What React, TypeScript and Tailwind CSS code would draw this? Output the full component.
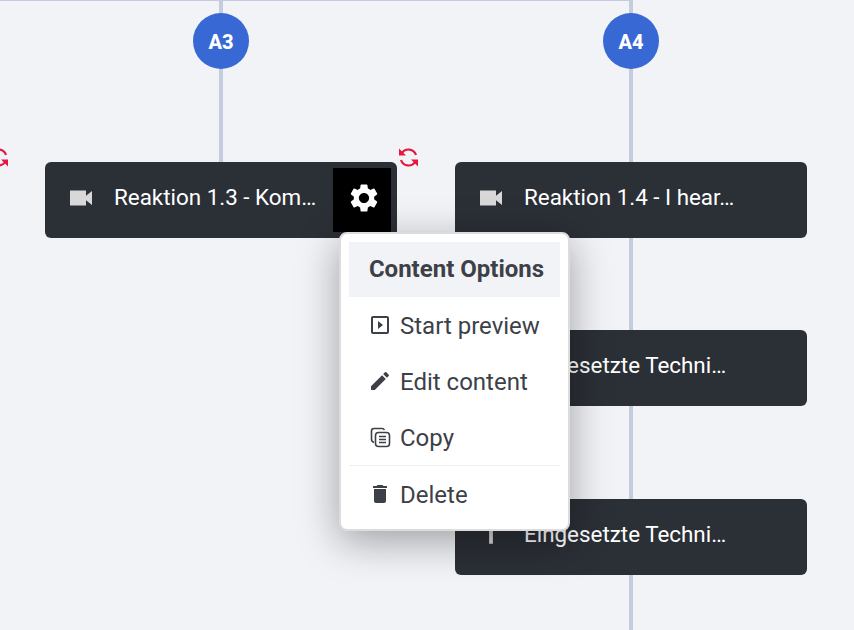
import { MdDelete, MdEdit, MdOutlineSlideshow, MdSettings, MdTitle } from "react-icons/md";

function CopyIcon() {
  return (
    <svg viewBox="0 0 24 24" fill="none" stroke="currentColor" strokeWidth="1.6" className="w-6 h-6">
      <path d="M6 17.5C4.6 17 3.5 16 3.5 14V6c0-1.5 1-2.5 2.5-2.5h8c1.2 0 2 .6 2.4 1.5" />
      <rect x="7.5" y="7.5" width="14" height="14" rx="3" />
      <path d="M11 11.5h7M11 14.5h7M11 17.5h7" />
    </svg>
  );
}

function VideoIcon() {
  return (
    <svg viewBox="0 0 22 16" fill="currentColor" className="w-[22px] h-4">
      <path d="M0 .5h16v5.2L22 1v14l-6-4.7v5.2H0z" />
    </svg>
  );
}

function SyncIcon({ className }: { className: string }) {
  return (
    <svg viewBox="0 0 19 19" className={`absolute -top-[14px] w-[19px] h-[19px] text-[#e8173f] ${className}`}>
      <path d="M2.8 5A8 8 0 0 1 17 7M16.2 14A8 8 0 0 1 2 12" fill="none" stroke="currentColor" strokeWidth="2.2" />
      <path d="M0 .5v7h7zM19 18.5v-7h-7z" fill="currentColor" />
    </svg>
  );
}

function Card({ text, icon, className, children }: { text: string; icon: React.ReactNode; className?: string; children?: React.ReactNode }) {
  return (
    <div className={`relative w-[352px] h-[76px] rounded-md bg-[#2b2f36] flex items-center p-[6px] ${className ?? ""}`}>
      <div className="w-[50px] ml-[5px] flex justify-center text-[#d8d8d8] shrink-0 pb-[5px]">{icon}</div>
      <span className="ml-[8px] pb-[6px] text-[22.4px] leading-none text-white flex-1 whitespace-nowrap">{text}</span>
      {children}
    </div>
  );
}

function Column({ label, lineClass, children }: { label: string; lineClass: string; children: React.ReactNode }) {
  return (
    <div className="relative w-[352px] flex flex-col items-center pt-[13px]">
      <div className={`absolute top-0 left-[174px] w-[4px] bg-[#c5cce0] ${lineClass}`} />
      <div className="relative w-14 h-14 rounded-full bg-[#3868d4] text-white font-extrabold text-[20px] pt-px flex items-center justify-center">{label}</div>
      {children}
    </div>
  );
}

function MenuItem({ icon, text }: { icon: React.ReactNode; text: string }) {
  return (
    <div className="h-14 flex items-center px-[19px] gap-2 text-[#3d4147] text-[24px] whitespace-nowrap">
      <span className="w-6 flex justify-center">{icon}</span>
      <span className="pt-[2px]">{text}</span>
    </div>
  );
}

export default function App() {
  return (
    <div className="relative h-[630px] w-[854px] overflow-hidden bg-[#f1f3f7] font-['Roboto',sans-serif]">
      <div className="absolute top-0 left-0 w-[631px] h-px bg-[#c5cce0]" />
      <div className="flex gap-[58px] pl-[45px] h-full">
        <Column label="A3" lineClass="h-[162px]">
          <Card className="mt-[93px]" text="Reaktion 1.3 - Kom…" icon={<VideoIcon />}>
            <div className="w-[58px] h-[64px] bg-black text-white flex items-center justify-center shrink-0 pl-[4px] pb-[5px]">
              <MdSettings size={34} />
            </div>
            <SyncIcon className="left-[354px]" />
            <SyncIcon className="-left-[56px]" />
          </Card>
        </Column>
        <Column label="A4" lineClass="h-full">
          <Card className="mt-[93px]" text="Reaktion 1.4 - I hear…" icon={<VideoIcon />} />
          <Card className="mt-[92px]" text="Eingesetzte Techni…" icon={<MdTitle size={30} />} />
          <Card className="mt-[93px]" text="Eingesetzte Techni…" icon={<MdTitle size={30} />} />
        </Column>
      </div>
      <div className="absolute left-[339px] top-[232px] w-[231px] h-[299px] bg-white border-2 border-[#dcdcdc] rounded-lg p-2 shadow-[0_10px_40px_rgba(0,0,0,0.35)]">
        <div className="h-[55px] bg-[#f1f3f7] flex items-center justify-center font-bold text-[24px] text-[#3d4147] pl-[4px] pb-[2px]">Content Options</div>
        <MenuItem icon={<MdOutlineSlideshow size={24} />} text="Start preview" />
        <MenuItem icon={<MdEdit size={24} />} text="Edit content" />
        <MenuItem icon={<CopyIcon />} text="Copy" />
        <div className="h-px bg-[#eeeeee]" />
        <MenuItem icon={<MdDelete size={24} />} text="Delete" />
      </div>
    </div>
  );
}
